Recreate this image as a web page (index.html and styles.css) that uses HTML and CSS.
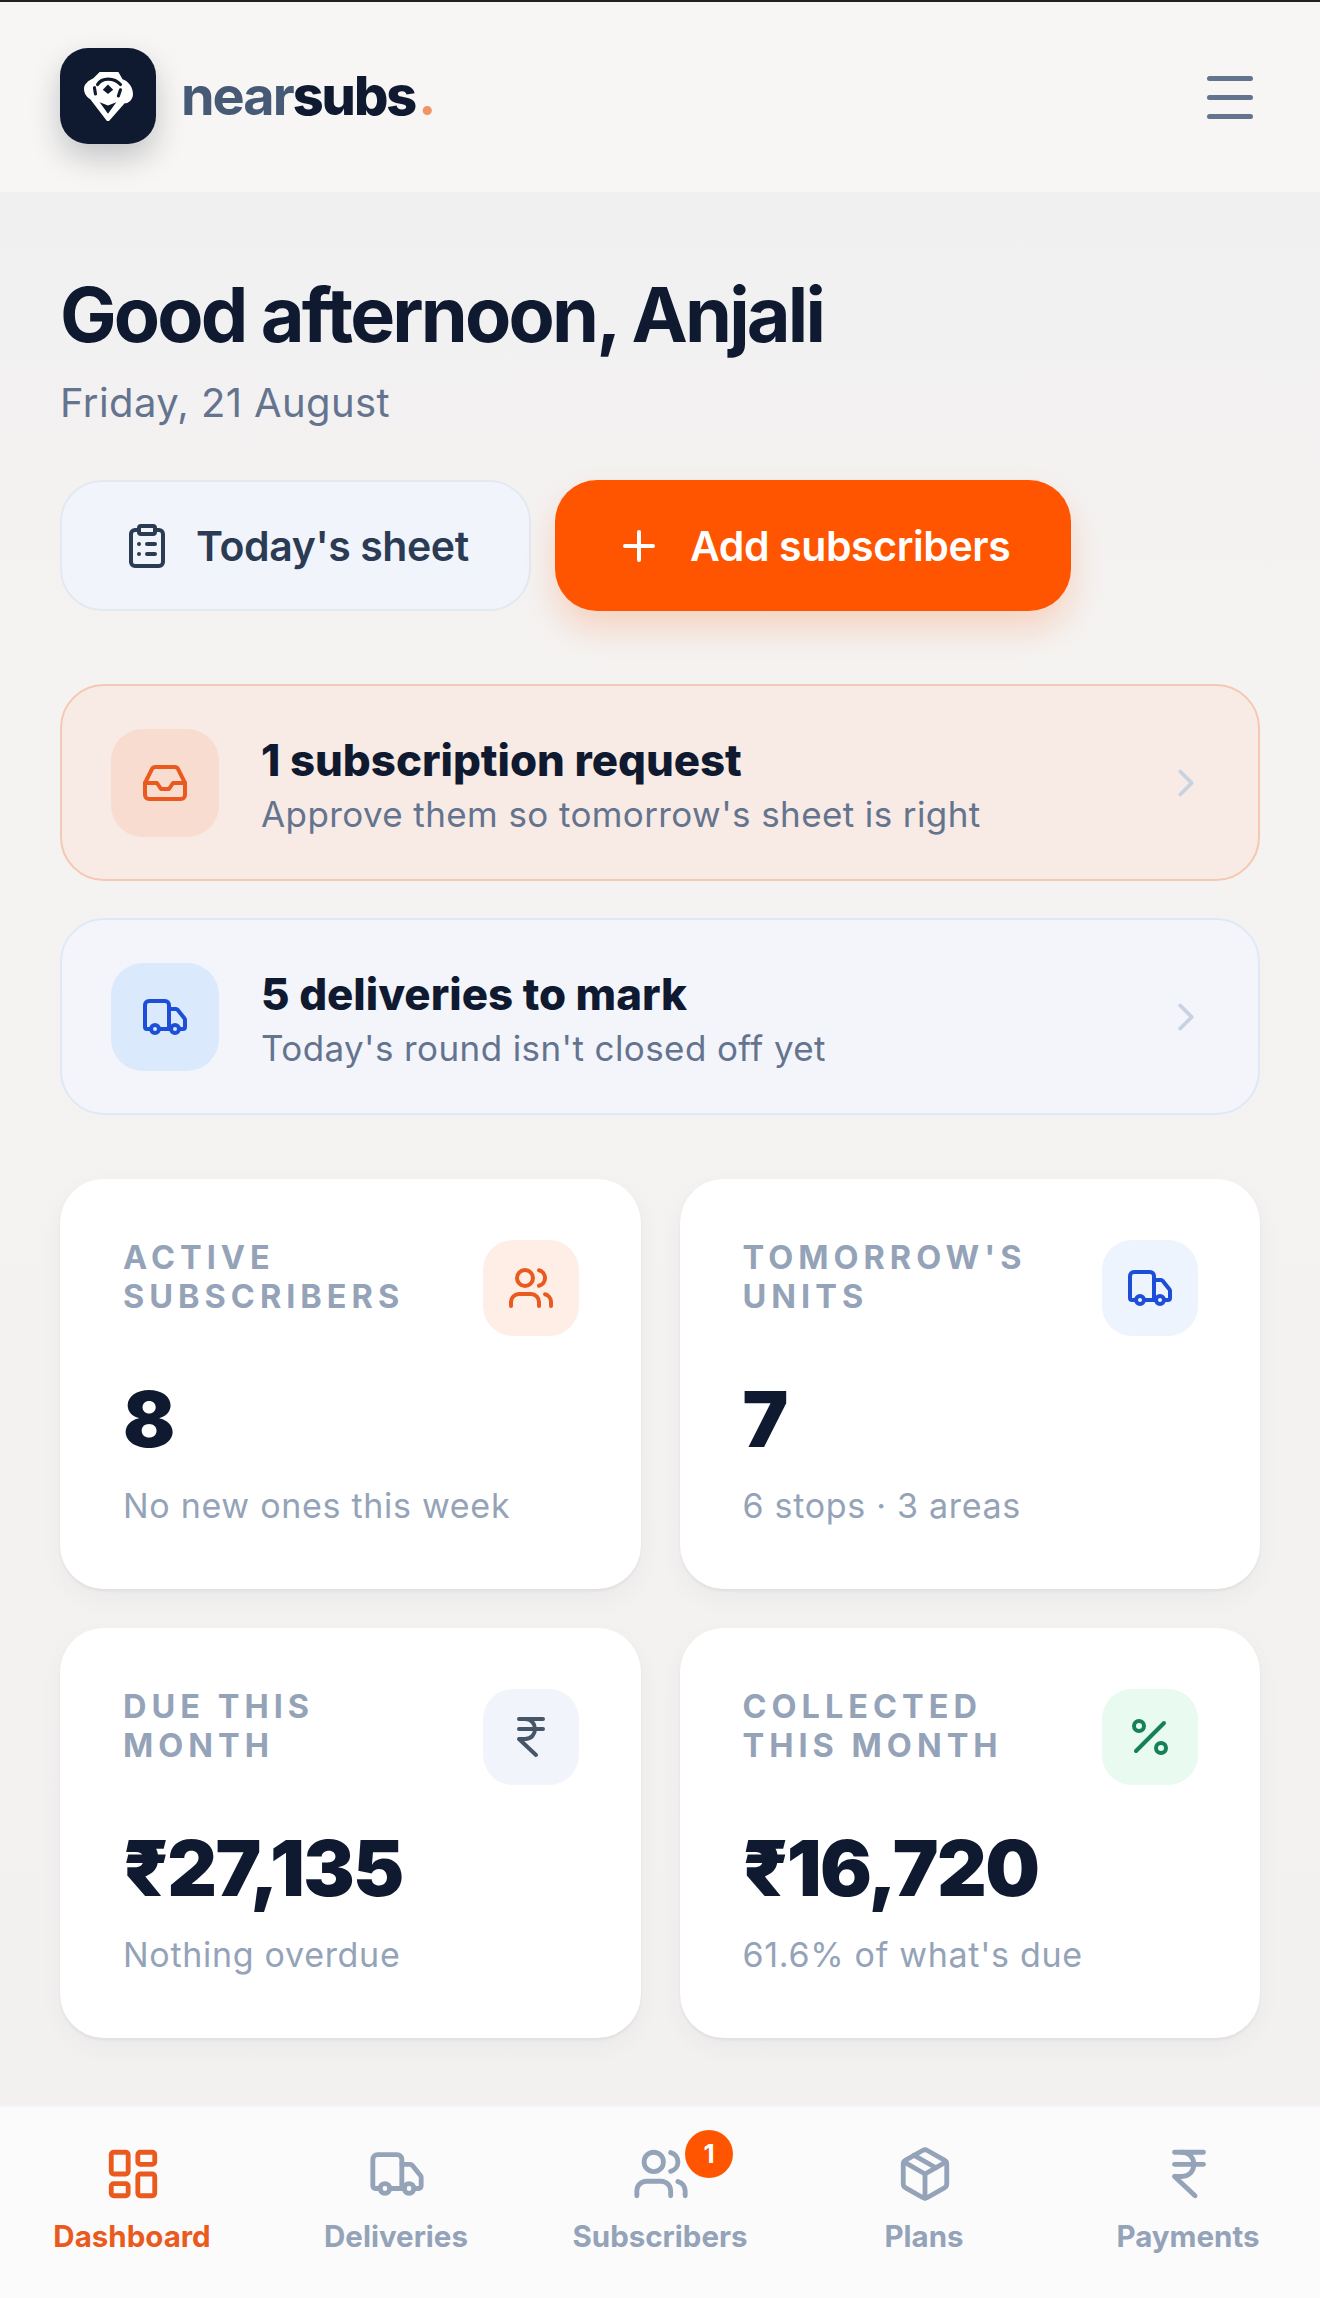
FILE: index.html
```html
<!DOCTYPE html>
<html lang="en">
<head>
    <meta charset="UTF-8">
    <meta name="viewport" content="width=device-width, initial-scale=1.0">
    <title>nearsubs - Dashboard</title>
    <link rel="stylesheet" href="styles.css">
</head>
<body>
    <header class="topbar">
        <div class="brand">
            <div class="logo">
                <svg width="49" height="50" viewBox="0 0 47 48" fill="none" stroke-linecap="round" stroke-linejoin="round">
                    <path d="M15 1 H33 L37 8 C43 10 47 16 47 22 C47 27 43 31 39 31 L24 48 H22 L6 27 C1 24 0 20 0 17 C0 13 4 9 9 7 Z" fill="#fff"/>
                    <path d="M13 13 C17 6 29 6 35 13" stroke="#0f1a30" stroke-width="3"/>
                    <path d="M23 13 L28 18 L23 22 L18 18 Z" fill="#0f1a30"/>
                    <path d="M10 16 L11 22 M35 18 L33 24" stroke="#0f1a30" stroke-width="3"/>
                    <path d="M23 41 L15 30 L23 33 L31 30 Z" fill="#0f1a30"/>
                </svg>
            </div>
            <div class="wordmark">near<b>subs</b><i>.</i></div>
        </div>
        <div class="menu"><span></span><span></span><span></span></div>
    </header>

    <main class="content">
        <h1>Good afternoon, Anjali</h1>
        <p class="date">Friday, 21 August</p>

        <div class="actions">
            <button class="btn btn-light">
                <svg width="48" height="48" viewBox="0 0 24 24" fill="none" stroke="currentColor" stroke-width="2" stroke-linecap="round" stroke-linejoin="round">
                    <rect x="8" y="2" width="8" height="4" rx="1"/>
                    <path d="M16 4h2a2 2 0 0 1 2 2v14a2 2 0 0 1-2 2H6a2 2 0 0 1-2-2V6a2 2 0 0 1 2-2h2"/>
                    <path d="M12 11h4M12 16h4M8 11h.01M8 16h.01"/>
                </svg>
                Today's sheet
            </button>
            <button class="btn btn-primary">
                <svg width="48" height="48" viewBox="0 0 24 24" fill="none" stroke="currentColor" stroke-width="2" stroke-linecap="round">
                    <path d="M5 12h14M12 5v14"/>
                </svg>
                Add subscribers
            </button>
        </div>

        <a class="alert alert-orange">
            <div class="alert-icon">
                <svg width="48" height="48" viewBox="0 0 24 24" fill="none" stroke="currentColor" stroke-width="2" stroke-linecap="round" stroke-linejoin="round">
                    <path d="M22 12h-6l-2 3h-4l-2-3H2"/>
                    <path d="M5.45 5.11 2 12v6a2 2 0 0 0 2 2h16a2 2 0 0 0 2-2v-6l-3.45-6.89A2 2 0 0 0 16.76 4H7.24a2 2 0 0 0-1.79 1.11z"/>
                </svg>
            </div>
            <div class="alert-text">
                <strong>1 subscription request</strong>
                <span>Approve them so tomorrow's sheet is right</span>
            </div>
            <svg class="chev" width="46" height="46" viewBox="0 0 24 24" fill="none" stroke="currentColor" stroke-width="2" stroke-linecap="round" stroke-linejoin="round"><path d="m9 18 6-6-6-6"/></svg>
        </a>

        <a class="alert alert-blue">
            <div class="alert-icon">
                <svg width="48" height="48" viewBox="0 0 24 24" fill="none" stroke="currentColor" stroke-width="2" stroke-linecap="round" stroke-linejoin="round">
                    <path d="M14 18V6a2 2 0 0 0-2-2H4a2 2 0 0 0-2 2v11a1 1 0 0 0 1 1h2"/>
                    <path d="M15 18H9"/>
                    <path d="M19 18h2a1 1 0 0 0 1-1v-3.65a1 1 0 0 0-.22-.624l-3.48-4.35A1 1 0 0 0 17.52 8H14"/>
                    <circle cx="17" cy="18" r="2"/>
                    <circle cx="7" cy="18" r="2"/>
                </svg>
            </div>
            <div class="alert-text">
                <strong>5 deliveries to mark</strong>
                <span>Today's round isn't closed off yet</span>
            </div>
            <svg class="chev" width="46" height="46" viewBox="0 0 24 24" fill="none" stroke="currentColor" stroke-width="2" stroke-linecap="round" stroke-linejoin="round"><path d="m9 18 6-6-6-6"/></svg>
        </a>

        <section class="stats">
            <div class="card">
                <div class="card-top">
                    <div class="card-label">ACTIVE<br>SUBSCRIBERS</div>
                    <div class="card-icon tint-orange">
                        <svg width="48" height="48" viewBox="0 0 24 24" fill="none" stroke="currentColor" stroke-width="2" stroke-linecap="round" stroke-linejoin="round">
                            <path d="M16 21v-2a4 4 0 0 0-4-4H6a4 4 0 0 0-4 4v2"/>
                            <circle cx="9" cy="7" r="4"/>
                            <path d="M22 21v-2a4 4 0 0 0-3-3.87"/>
                            <path d="M16 3.13a4 4 0 0 1 0 7.75"/>
                        </svg>
                    </div>
                </div>
                <div class="card-value">8</div>
                <div class="card-sub">No new ones this week</div>
            </div>
            <div class="card">
                <div class="card-top">
                    <div class="card-label">TOMORROW'S<br>UNITS</div>
                    <div class="card-icon tint-blue">
                        <svg width="48" height="48" viewBox="0 0 24 24" fill="none" stroke="currentColor" stroke-width="2" stroke-linecap="round" stroke-linejoin="round">
                            <path d="M14 18V6a2 2 0 0 0-2-2H4a2 2 0 0 0-2 2v11a1 1 0 0 0 1 1h2"/>
                            <path d="M15 18H9"/>
                            <path d="M19 18h2a1 1 0 0 0 1-1v-3.65a1 1 0 0 0-.22-.624l-3.48-4.35A1 1 0 0 0 17.52 8H14"/>
                            <circle cx="17" cy="18" r="2"/>
                            <circle cx="7" cy="18" r="2"/>
                        </svg>
                    </div>
                </div>
                <div class="card-value">7</div>
                <div class="card-sub">6 stops · 3 areas</div>
            </div>
            <div class="card">
                <div class="card-top">
                    <div class="card-label">DUE THIS<br>MONTH</div>
                    <div class="card-icon tint-grey">
                        <svg width="48" height="48" viewBox="0 0 24 24" fill="none" stroke="currentColor" stroke-width="2" stroke-linecap="round" stroke-linejoin="round">
                            <path d="M6 3h12M6 8h12M6 13l8.5 8M6 13h3"/>
                            <path d="M9 13c6.667 0 6.667-10 0-10"/>
                        </svg>
                    </div>
                </div>
                <div class="card-value">₹27,135</div>
                <div class="card-sub">Nothing overdue</div>
            </div>
            <div class="card">
                <div class="card-top">
                    <div class="card-label">COLLECTED<br>THIS MONTH</div>
                    <div class="card-icon tint-green">
                        <svg width="48" height="48" viewBox="0 0 24 24" fill="none" stroke="currentColor" stroke-width="2" stroke-linecap="round" stroke-linejoin="round">
                            <path d="M19 5 5 19"/>
                            <circle cx="6.5" cy="6.5" r="2.5"/>
                            <circle cx="17.5" cy="17.5" r="2.5"/>
                        </svg>
                    </div>
                </div>
                <div class="card-value">₹16,720</div>
                <div class="card-sub">61.6% of what's due</div>
            </div>
        </section>
    </main>

    <nav class="tabs">
        <a class="tab active">
            <svg width="58" height="58" viewBox="0 0 24 24" fill="none" stroke="currentColor" stroke-width="2" stroke-linecap="round" stroke-linejoin="round">
                <rect x="3" y="3" width="7" height="9" rx="1"/>
                <rect x="14" y="3" width="7" height="5" rx="1"/>
                <rect x="14" y="12" width="7" height="9" rx="1"/>
                <rect x="3" y="16" width="7" height="5" rx="1"/>
            </svg>
            Dashboard
        </a>
        <a class="tab">
            <svg width="58" height="58" viewBox="0 0 24 24" fill="none" stroke="currentColor" stroke-width="2" stroke-linecap="round" stroke-linejoin="round">
                <path d="M14 18V6a2 2 0 0 0-2-2H4a2 2 0 0 0-2 2v11a1 1 0 0 0 1 1h2"/>
                <path d="M15 18H9"/>
                <path d="M19 18h2a1 1 0 0 0 1-1v-3.65a1 1 0 0 0-.22-.624l-3.48-4.35A1 1 0 0 0 17.52 8H14"/>
                <circle cx="17" cy="18" r="2"/>
                <circle cx="7" cy="18" r="2"/>
            </svg>
            Deliveries
        </a>
        <a class="tab">
            <svg width="58" height="58" viewBox="0 0 24 24" fill="none" stroke="currentColor" stroke-width="2" stroke-linecap="round" stroke-linejoin="round">
                <path d="M16 21v-2a4 4 0 0 0-4-4H6a4 4 0 0 0-4 4v2"/>
                <circle cx="9" cy="7" r="4"/>
                <path d="M22 21v-2a4 4 0 0 0-3-3.87"/>
                <path d="M16 3.13a4 4 0 0 1 0 7.75"/>
            </svg>
            <span class="badge">1</span>
            Subscribers
        </a>
        <a class="tab">
            <svg width="58" height="58" viewBox="0 0 24 24" fill="none" stroke="currentColor" stroke-width="2" stroke-linecap="round" stroke-linejoin="round">
                <path d="M11 21.73a2 2 0 0 0 2 0l7-4A2 2 0 0 0 21 16V8a2 2 0 0 0-1-1.73l-7-4a2 2 0 0 0-2 0l-7 4A2 2 0 0 0 3 8v8a2 2 0 0 0 1 1.73z"/>
                <path d="M12 22V12"/>
                <path d="m3.3 7 8.7 5 8.7-5"/>
                <path d="m7.5 4.27 9 5.15"/>
            </svg>
            Plans
        </a>
        <a class="tab">
            <svg width="58" height="58" viewBox="0 0 24 24" fill="none" stroke="currentColor" stroke-width="2" stroke-linecap="round" stroke-linejoin="round">
                <path d="M6 3h12M6 8h12M6 13l8.5 8M6 13h3"/>
                <path d="M9 13c6.667 0 6.667-10 0-10"/>
            </svg>
            Payments
        </a>
    </nav>
</body>
</html>
```

FILE: styles.css
```css
*{
    box-sizing: border-box;
}

body{
    margin: 0;
    min-height: 2298px;
    display: flex;
    flex-direction: column;
    font-family: Inter, "Noto Sans", sans-serif;
    color: #0f1a30;
    background: linear-gradient(180deg, #f1f0f1 192px, #f5f3f1 700px, #f3f1f0 2100px);
    border-top: 2px solid #24211e;
}

.topbar{
    height: 190px;
    padding: 0 67px 0 60px;
    display: flex;
    align-items: center;
    justify-content: space-between;
    background: #f8f6f4;
}

.brand{
    display: flex;
    align-items: center;
    gap: 25px;
    margin-bottom: 3px;
}

.logo{
    width: 96px;
    height: 96px;
    border-radius: 28px;
    background: #0f1a30;
    display: flex;
    align-items: center;
    justify-content: center;
    box-shadow: 0 14px 30px rgba(15, 26, 48, 0.22);
}

.wordmark{
    font-size: 54px;
    font-weight: 700;
    letter-spacing: -2px;
    color: #475a75;
}

.wordmark b{
    color: #0f1a30;
    font-weight: 800;
}

.wordmark i{
    font-style: normal;
    color: #f09468;
    margin-left: 3px;
}

.menu{
    width: 46px;
    display: flex;
    flex-direction: column;
    gap: 14px;
}

.menu span{
    height: 5px;
    border-radius: 3px;
    background: #64748f;
}

.content{
    flex: 1;
    padding: 84px 60px 0;
}

h1{
    margin: 0;
    font-size: 75.5px;
    line-height: 78px;
    font-weight: 700;
    letter-spacing: -2.8px;
}

.date{
    margin: 24px 0 0;
    font-size: 40px;
    line-height: 50px;
    letter-spacing: 0.4px;
    color: #64748f;
}

.actions{
    margin-top: 52px;
    display: flex;
    gap: 24px;
}

.btn{
    height: 131px;
    flex: none;
    border-radius: 42px;
    display: flex;
    align-items: center;
    font-family: inherit;
    font-size: 41px;
    font-weight: 600;
    letter-spacing: -0.4px;
}

.btn-light{
    width: 471px;
    padding: 0 0 0 61px;
    gap: 25px;
    background: #f1f5fb;
    border: 2px solid #e3e8f1;
    color: #2b3b54;
}

.btn-primary{
    width: 516px;
    padding: 0 0 0 60px;
    gap: 27px;
    background: #ff5500;
    border: 0;
    color: #fff;
    box-shadow: 0 18px 34px rgba(255, 85, 0, 0.2);
}

.alert{
    height: 197px;
    margin-top: 37px;
    padding: 0 49px;
    border-radius: 44px;
    display: flex;
    align-items: center;
    gap: 42px;
    border: 2px solid;
}

.actions + .alert{
    margin-top: 73px;
}

.alert-orange{
    background: #f8eae4;
    border-color: #f5c8b2;
}

.alert-blue{
    background: #f3f5fb;
    border-color: #dfe8f8;
}

.alert-icon{
    width: 108px;
    height: 108px;
    flex: none;
    border-radius: 32px;
    display: flex;
    align-items: center;
    justify-content: center;
}

.alert-orange .alert-icon{
    background: #f8dccf;
    color: #ea5a1e;
}

.alert-blue .alert-icon{
    background: #dbe9fd;
    color: #1d4ed8;
}

.alert-text{
    flex: 1;
    display: flex;
    flex-direction: column;
    gap: 4px;
    padding-top: 6px;
}

.alert-text strong{
    font-size: 43.8px;
    line-height: 52px;
    font-weight: 800;
}

.alert-text span{
    font-size: 35px;
    line-height: 46px;
    letter-spacing: 0.4px;
    color: #64748f;
}

.chev{
    flex: none;
    color: #c8d2e0;
}

.stats{
    margin-top: 64px;
    display: grid;
    grid-template-columns: 1fr 1fr;
    gap: 39px;
}

.card{
    height: 410px;
    padding: 61px 62px 0 63px;
    border-radius: 44px;
    background: #fff;
    box-shadow: 0 2px 3px rgba(30, 41, 70, 0.06), 0 10px 24px rgba(30, 41, 70, 0.04);
}

.card-top{
    display: flex;
    justify-content: space-between;
    align-items: flex-start;
}

.card-label{
    margin-top: -2px;
    font-size: 32.5px;
    line-height: 39px;
    font-weight: 700;
    letter-spacing: 5px;
    color: #94a3b8;
}

.card-icon{
    width: 96px;
    height: 96px;
    flex: none;
    border-radius: 30px;
    display: flex;
    align-items: center;
    justify-content: center;
}

.tint-orange{
    background: #ffeee6;
    color: #ea5a1e;
}

.tint-blue{
    background: #eef4fe;
    color: #1d4ed8;
}

.tint-grey{
    background: #f1f5fb;
    color: #475569;
}

.tint-green{
    background: #e9faf1;
    color: #15805a;
}

.card-value{
    margin-top: 39px;
    font-size: 77px;
    line-height: 88px;
    font-weight: 900;
    letter-spacing: -1.6px;
}

.card-sub{
    margin-top: 20px;
    font-size: 34px;
    line-height: 46px;
    letter-spacing: 0.7px;
    color: #94a3b8;
}

.tabs{
    height: 193px;
    display: grid;
    grid-template-columns: repeat(5, 1fr);
    background: #fbfbfc;
    border-top: 2px solid #f3f5fa;
}

.tab{
    position: relative;
    padding-top: 38px;
    display: flex;
    flex-direction: column;
    align-items: center;
    gap: 15px;
    font-size: 29.5px;
    line-height: 36px;
    font-weight: 700;
    color: #94a3b8;
}

.tab svg{
    margin-left: 2px;
}

.tab.active{
    color: #ea5a1e;
}

.badge{
    position: absolute;
    top: 23px;
    left: 157px;
    width: 48px;
    height: 48px;
    border-radius: 50%;
    background: #ff5500;
    color: #fff;
    font-size: 26px;
    font-weight: 700;
    display: flex;
    align-items: center;
    justify-content: center;
}
```
